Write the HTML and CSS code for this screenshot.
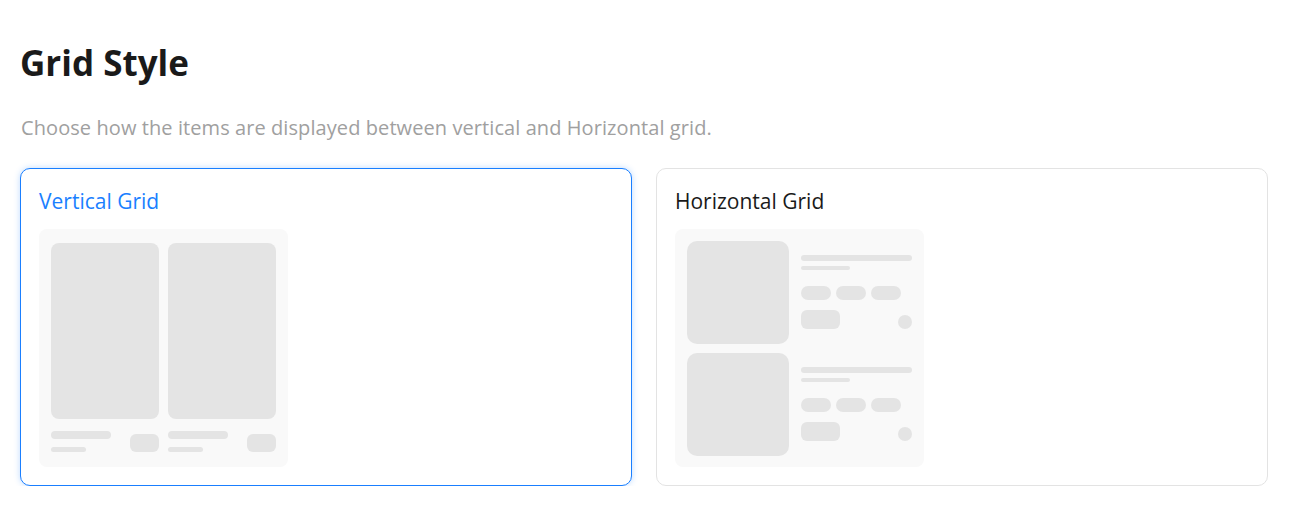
FILE: index.html
```html
<!DOCTYPE html>
<html lang="en">
<head>
    <meta charset="UTF-8">
    <meta name="viewport" content="width=device-width, initial-scale=1.0">
    <title>Grid Style</title>
    <link rel="stylesheet" href="styles.css">
</head>
<body>

<div class="section">
    <h1 class="section-title">Grid Style</h1>
    <p class="section-desc">Choose how the items are displayed between vertical and Horizontal grid.</p>

    <div class="options">
        <div class="option selected">
            <p class="option-name">Vertical Grid</p>
            <div class="preview preview-vertical">
                <div class="v-item">
                    <div class="v-image"></div>
                    <div class="v-info">
                        <div class="v-lines">
                            <span class="line line-long"></span>
                            <span class="line line-short"></span>
                        </div>
                        <span class="v-btn"></span>
                    </div>
                </div>
                <div class="v-item">
                    <div class="v-image"></div>
                    <div class="v-info">
                        <div class="v-lines">
                            <span class="line line-long"></span>
                            <span class="line line-short"></span>
                        </div>
                        <span class="v-btn"></span>
                    </div>
                </div>
            </div>
        </div>

        <div class="option">
            <p class="option-name">Horizontal Grid</p>
            <div class="preview preview-horizontal">
                <div class="h-item">
                    <div class="h-image"></div>
                    <div class="h-info">
                        <span class="h-line h-line-long"></span>
                        <span class="h-line h-line-short"></span>
                        <div class="h-chips">
                            <span class="chip"></span>
                            <span class="chip"></span>
                            <span class="chip"></span>
                        </div>
                        <div class="h-bottom">
                            <span class="h-btn"></span>
                            <span class="dot"></span>
                        </div>
                    </div>
                </div>
                <div class="h-item">
                    <div class="h-image"></div>
                    <div class="h-info">
                        <span class="h-line h-line-long"></span>
                        <span class="h-line h-line-short"></span>
                        <div class="h-chips">
                            <span class="chip"></span>
                            <span class="chip"></span>
                            <span class="chip"></span>
                        </div>
                        <div class="h-bottom">
                            <span class="h-btn"></span>
                            <span class="dot"></span>
                        </div>
                    </div>
                </div>
            </div>
        </div>
    </div>
</div>

</body>
</html>
```

FILE: styles.css
```css
body {
    margin: 0;
    padding: 0;
    background: #fff;
    font-family: "Open Sans", "Noto Sans", sans-serif;
}

.section {
    padding: 40px 24px 0 20px;
}

.section-title {
    margin: 0;
    font-size: 35px;
    line-height: 46px;
    font-weight: 700;
    color: #1a1a1a;
}

.section-desc {
    margin: 30px 0 0 1px;
    font-size: 20px;
    line-height: 24px;
    letter-spacing: 0.08px;
    color: #a0a0a0;
}

.options {
    display: grid;
    grid-template-columns: 1fr 1fr;
    gap: 24px;
    margin-top: 28px;
}

.option {
    border: 1px solid #e3e3e3;
    border-radius: 10px;
    padding: 18px;
    background: #fff;
}

.option.selected {
    border-color: #1a7fff;
    box-shadow: 0 0 6px rgba(26, 127, 255, 0.28);
}

.option-name {
    margin: 0 0 16px 0;
    padding-top: 2px;
    font-size: 21px;
    line-height: 24px;
    color: #1a1a1a;
}

.selected .option-name {
    color: #1a7fff;
}

.preview {
    width: 249px;
    height: 238px;
    box-sizing: border-box;
    background: #f9f9f9;
    border-radius: 8px;
}

/* vertical preview */
.preview-vertical {
    display: flex;
    gap: 9px;
    padding: 14px 12px;
}

.v-item {
    flex: 1;
    display: flex;
    flex-direction: column;
    gap: 12px;
}

.v-image {
    height: 176px;
    background: #e4e4e4;
    border-radius: 8px;
}

.v-info {
    display: flex;
    justify-content: space-between;
}

.v-lines {
    display: flex;
    flex-direction: column;
    gap: 8px;
}

.line {
    display: block;
    background: #e4e4e4;
    border-radius: 4px;
}

.line-long {
    width: 60px;
    height: 8px;
}

.line-short {
    width: 35px;
    height: 5px;
}

.v-btn {
    width: 29px;
    height: 18px;
    margin-top: 3px;
    background: #e4e4e4;
    border-radius: 6px;
}

/* horizontal preview */
.preview-horizontal {
    display: flex;
    flex-direction: column;
    gap: 9px;
    padding: 12px;
}

.h-item {
    display: flex;
    gap: 12px;
}

.h-image {
    width: 102px;
    height: 103px;
    background: #e4e4e4;
    border-radius: 10px;
}

.h-info {
    flex: 1;
    display: flex;
    flex-direction: column;
    padding-top: 14px;
}

.h-line {
    display: block;
    background: #e4e4e4;
    border-radius: 3px;
}

.h-line-long {
    height: 6px;
}

.h-line-short {
    width: 49px;
    height: 4px;
    margin-top: 5px;
}

.h-chips {
    display: flex;
    gap: 5px;
    margin-top: 16px;
}

.chip {
    width: 30px;
    height: 14px;
    background: #e4e4e4;
    border-radius: 7px;
}

.h-bottom {
    display: flex;
    justify-content: space-between;
    align-items: flex-end;
    margin-top: 10px;
}

.h-btn {
    width: 39px;
    height: 19px;
    background: #e4e4e4;
    border-radius: 6px;
}

.dot {
    width: 14px;
    height: 14px;
    background: #e4e4e4;
    border-radius: 50%;
}
```
